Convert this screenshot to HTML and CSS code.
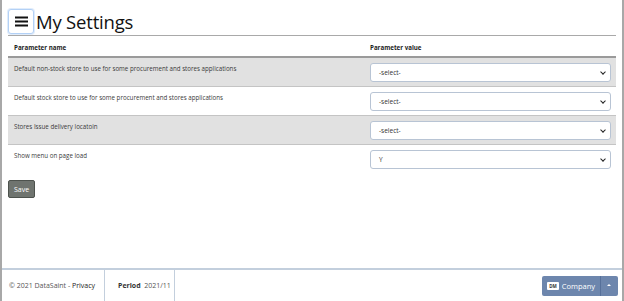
FILE: index.html
```html
<!DOCTYPE html>
<html>
<head>
<meta charset="utf-8">
<link rel="stylesheet" href="styles.css">
</head>
<body>
<div class="frame">
  <main class="main">
    <header class="head">
      <button class="menu-btn" aria-label="menu">
        <svg width="13" height="11" viewBox="0 0 13 11"><rect x="0" y="0.5" width="13" height="2" fill="#111"/><rect x="0" y="4.5" width="13" height="2" fill="#111"/><rect x="0" y="8.5" width="13" height="2" fill="#111"/></svg>
      </button>
      <h1 class="title">My Settings</h1>
    </header>
    <table class="params">
      <thead>
        <tr><th class="c-name">Parameter name</th><th class="c-val">Parameter value</th></tr>
      </thead>
      <tbody>
        <tr class="shade"><td class="c-name">Default non-stock store to use for some procurement and stores applications</td><td class="c-val"><div class="sel">-select-<span class="chev"></span></div></td></tr>
        <tr><td class="c-name">Default stock store to use for some procurement and stores applications</td><td class="c-val"><div class="sel">-select-<span class="chev"></span></div></td></tr>
        <tr class="shade"><td class="c-name">Stores Issue delivery locatoin</td><td class="c-val"><div class="sel">-select-<span class="chev"></span></div></td></tr>
        <tr><td class="c-name">Show menu on page load</td><td class="c-val"><div class="sel">Y<span class="chev"></span></div></td></tr>
      </tbody>
    </table>
    <button class="save">Save</button>
  </main>
  <footer class="foot">
    <div class="f-cell f-copy"><span>© 2021 DataSaint - <span class="dark">Privacy</span></span></div>
    <div class="f-cell f-period"><span><b>Period</b>&nbsp;&nbsp;2021/11</span></div>
    <div class="f-spacer"></div>
    <div class="company">
      <span class="c-main"><span class="dm">DM</span>Company</span><span class="c-caret"></span>
    </div>
  </footer>
</div>
</body>
</html>
```
FILE: styles.css
```css
* { box-sizing: border-box; }
html, body { margin: 0; padding: 0; background: #fff; }
body { font-family: "Open Sans", "Noto Sans", sans-serif; color: #212529; }
.frame {
  width: 624px; height: 301px;
  border-left: 2px solid #a8a8a8;
  border-right: 2px solid #a8a8a8;
  display: flex; flex-direction: column;
}
.main { flex: 1; padding: 8px 6px 0 6px; }
.head {
  display: flex; align-items: center; gap: 2px;
  border-bottom: 1px solid #a9a9a9;
  padding-bottom: 1px;
  height: 28px;
}
.menu-btn {
  width: 26px; height: 25px; margin: 0;
  border: 1px solid #b3d1f6; border-radius: 3px;
  box-shadow: 0 0 0 1px #e0ecfb;
  background: #fff; padding: 0; outline: none;
  display: flex; align-items: center; justify-content: center;
}
.title { margin: 0; font-size: 18.5px; font-weight: 400; line-height: 25px; color: #111; letter-spacing: -0.2px; }
.params { width: 100%; border-collapse: collapse; margin-top: 0; font-size: 6.2px; }
.params th { text-align: left; font-weight: 700; height: 21px; padding: 2px 6px 0 6px; border-bottom: 2px solid #9a9a9a; color: #222; }
.params td { padding: 0 6px; border-top: 1px solid #c4c4c4; vertical-align: top; color: #3a3a3a; }
.params tbody tr { height: 29px; }
.params tbody tr:first-child td { border-top: none; }
.params td.c-name { padding-top: 6px; }
.params td.c-val { padding-top: 5px; padding-right: 5px; }
.c-name { width: 356px; }
.shade td { background: #e1e1e1; }
.sel {
  position: relative;
  height: 19px; border: 1px solid #b8c4d4; border-radius: 3px;
  background: #fff; font-size: 6.5px; line-height: 17px;
  padding-left: 8px; color: #333;
}
.chev {
  position: absolute; right: 5px; top: 6px;
  width: 4px; height: 4px;
  border-right: 1.5px solid #222; border-bottom: 1.5px solid #222;
  transform: rotate(45deg);
}
.save {
  margin-top: 7px; margin-left: 0;
  width: 27px; height: 18px; padding: 0;
  background: #6f746f; color: #fff; border: 1px solid #4d524d; border-radius: 2px;
  font-family: inherit; font-size: 7px;
}
.foot {
  height: 33px; border-top: 2px solid #c3cfdd;
  display: flex; align-items: stretch;
  font-size: 7px; color: #555;
}
.f-cell { display: flex; align-items: center; border-right: 1px solid #c3cfdd; }
.f-copy { width: 103px; padding-left: 7px; }
.f-period { width: 70px; padding-left: 13px; }
.f-period b { color: #333; }
.dark { color: #222; }
.f-spacer { flex: 1; }
.company {
  align-self: center; display: flex; height: 20px; margin-right: 4px;
  background: #6d86ad; border-radius: 2px; color: #fff;
}
.c-main { display: flex; align-items: center; padding: 0 5px 0 5px; font-size: 7.5px; border-right: 1px solid #56709a; }
.dm { background: #fff; color: #333; font-size: 4.5px; font-weight: 700; padding: 1px 2px; margin-right: 3px; border-radius: 1px; }
.c-caret { width: 17px; position: relative; }
.c-caret::after {
  content: ""; position: absolute; left: 6px; top: 8px;
  border-left: 2px solid transparent; border-right: 2px solid transparent; border-bottom: 2px solid #fff;
}
```
